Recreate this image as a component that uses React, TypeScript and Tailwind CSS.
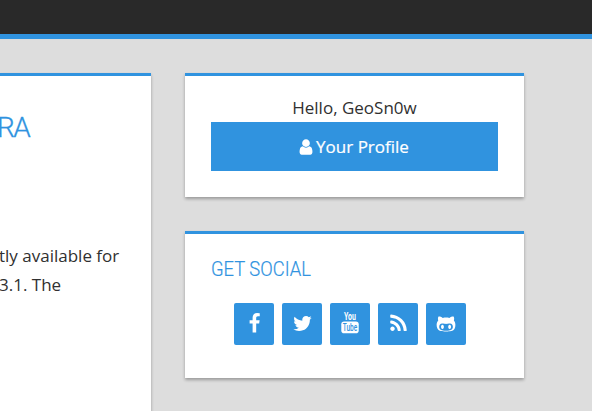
import type { ReactNode } from "react";
import { FaGithubAlt } from "react-icons/fa";

function Glyph({ d, className }: { d: string; className: string }) {
  return (
    <svg viewBox="0 0 1792 1792" fill="currentColor" className={className}>
      <path d={d} />
    </svg>
  );
}

const userPath =
  "M1536 1399q0 109-62.500 187t-150.500 78h-854q-88 0-150.500-78t-62.500-187q0-85 8.500-160.500t31.500-152 58.500-131 94-89 134.500-34.500q131 128 313 128t313-128q76 0 134.500 34.500t94 89 58.500 131 31.500 152 8.500 160.500zm-256-887q0 159-112.500 271.500t-271.500 112.500-271.500-112.500-112.500-271.500 112.500-271.500 271.500-112.500 271.500 112.500 112.500 271.500z";
const facebookPath =
  "M1343 12v264h-157q-86 0-116 36t-30 108v189h293l-39 296h-254v759h-306v-759h-255v-296h255v-218q0-186 104-288.500t277-102.500q147 0 228 12z";
const twitterPath =
  "M1684 408q-67 98-162 167 1 14 1 42 0 130-38 259.500t-115.500 248.500-184.500 210.500-258 146-323 54.500q-271 0-496-145 35 4 78 4 225 0 401-138-105-2-188-64.500t-114-159.500q33 5 61 5 43 0 85-11-112-23-185.500-111.500t-73.500-205.500v-4q68 38 146 41-66-44-105-115t-39-154q0-88 44-163 121 149 294.500 238.500t371.500 99.500q-8-38-8-74 0-134 94.500-228.500t228.500-94.500q140 0 236 102 109-21 205-78-37 115-142 178 93-10 186-50z";
const rssPath =
  "M576 1344q0 80-56 136t-136 56-136-56-56-136 56-136 136-56 136 56 56 136zm512 123q2 28-17 48-18 21-47 21h-135q-25 0-43-16.500t-20-41.500q-22-229-184.500-391.500t-391.500-184.500q-25-2-41.500-20t-16.500-43v-135q0-29 21-47 17-17 43-17h5q160 13 306 80.500t259 181.500q114 113 181.500 259t80.500 306zm512 2q2 27-18 47-18 20-46 20h-143q-26 0-44.500-17.500t-19.500-42.500q-12-215-101-408.500t-231.500-336-336-231.500-408.500-102q-25-1-42.500-19.500t-17.500-43.500v-143q0-28 20-46 18-18 44-18h3q262 13 501.500 120t425.500 294q187 186 294 425.500t120 501.500z";

function YouTubeLogo() {
  return (
    <svg viewBox="0 0 18 22" className="-mt-px h-[22px] w-[18px] overflow-visible font-['Roboto',sans-serif]">
      <text x="3" y="8.2" fontSize="10.5" fontWeight="700" textLength="12" lengthAdjust="spacingAndGlyphs" fill="white">
        You
      </text>
      <rect x="0.3" y="9.5" width="17.4" height="11.7" rx="2.8" fill="white" />
      <text x="1.8" y="19.1" fontSize="10.5" fontWeight="500" textLength="14.4" lengthAdjust="spacingAndGlyphs" fill="#3093df">
        Tube
      </text>
    </svg>
  );
}

function Card({ className, children }: { className: string; children: ReactNode }) {
  return (
    <section className={`border-t-3 border-[#3093df] bg-white shadow-[0_2px_3px_rgba(0,0,0,0.3)] ${className}`}>
      {children}
    </section>
  );
}

function SocialLink({ label, children }: { label: string; children: ReactNode }) {
  return (
    <a aria-label={label} className="flex h-[42px] w-10 items-start justify-center rounded-[2px] bg-[#3093df] pt-2.5 text-white">
      {children}
    </a>
  );
}

export default function App() {
  return (
    <div className="h-[411px] w-[592px] overflow-hidden bg-[#dddddd] font-['Open_Sans',sans-serif] text-[17px] text-[#303030]">
      <header className="h-[39px] border-b-5 border-[#3093df] bg-[#292929]" />
      <main className="flex items-start gap-[34px] pt-[34px]">
        <Card className="h-[360px] w-[151px] shrink-0">
          <h1 className="-ml-[3px] mt-8 pt-px font-['Roboto',sans-serif] text-[28px] font-light leading-[38px] tracking-[-1.5px] text-[#3093df] [-webkit-text-stroke:0.3px_#3093df]">
            RA
          </h1>
          <p className="-ml-px mt-[94px] whitespace-nowrap leading-[29px]">
            tly available for
            <br />
            3.1. The
          </p>
        </Card>
        <aside className="flex w-[339px] flex-col gap-[34px]">
          <Card className="h-[124px] px-[26px] pt-[17px]">
            <p className="text-center leading-[29px]">Hello, GeoSn0w</p>
            <a className="flex h-[49px] items-center justify-center gap-px bg-[#3093df] text-white">
              <Glyph d={userPath} className="-ml-[3px] h-[18px] w-[18px]" />
              <span className="[-webkit-text-stroke:0.2px_white]">Your Profile</span>
            </a>
          </Card>
          <Card className="h-[147px] px-[26px] pt-5">
            <h2 className="origin-left scale-x-[0.92] font-['Roboto',sans-serif] text-[20px] font-light leading-[30px] text-[#3093df] [-webkit-text-stroke:0.2px_#3093df]">
              GET SOCIAL
            </h2>
            <div className="ml-[23px] mt-[19px] flex gap-2">
              <SocialLink label="Facebook">
                <Glyph d={facebookPath} className="h-[21px] w-[21px]" />
              </SocialLink>
              <SocialLink label="Twitter">
                <Glyph d={twitterPath} className="ml-px h-[21px] w-[21px]" />
              </SocialLink>
              <SocialLink label="YouTube">
                <YouTubeLogo />
              </SocialLink>
              <SocialLink label="RSS">
                <Glyph d={rssPath} className="ml-px h-[21px] w-[21px]" />
              </SocialLink>
              <SocialLink label="GitHub">
                <FaGithubAlt className="mt-px h-5 w-5" />
              </SocialLink>
            </div>
          </Card>
        </aside>
      </main>
    </div>
  );
}
